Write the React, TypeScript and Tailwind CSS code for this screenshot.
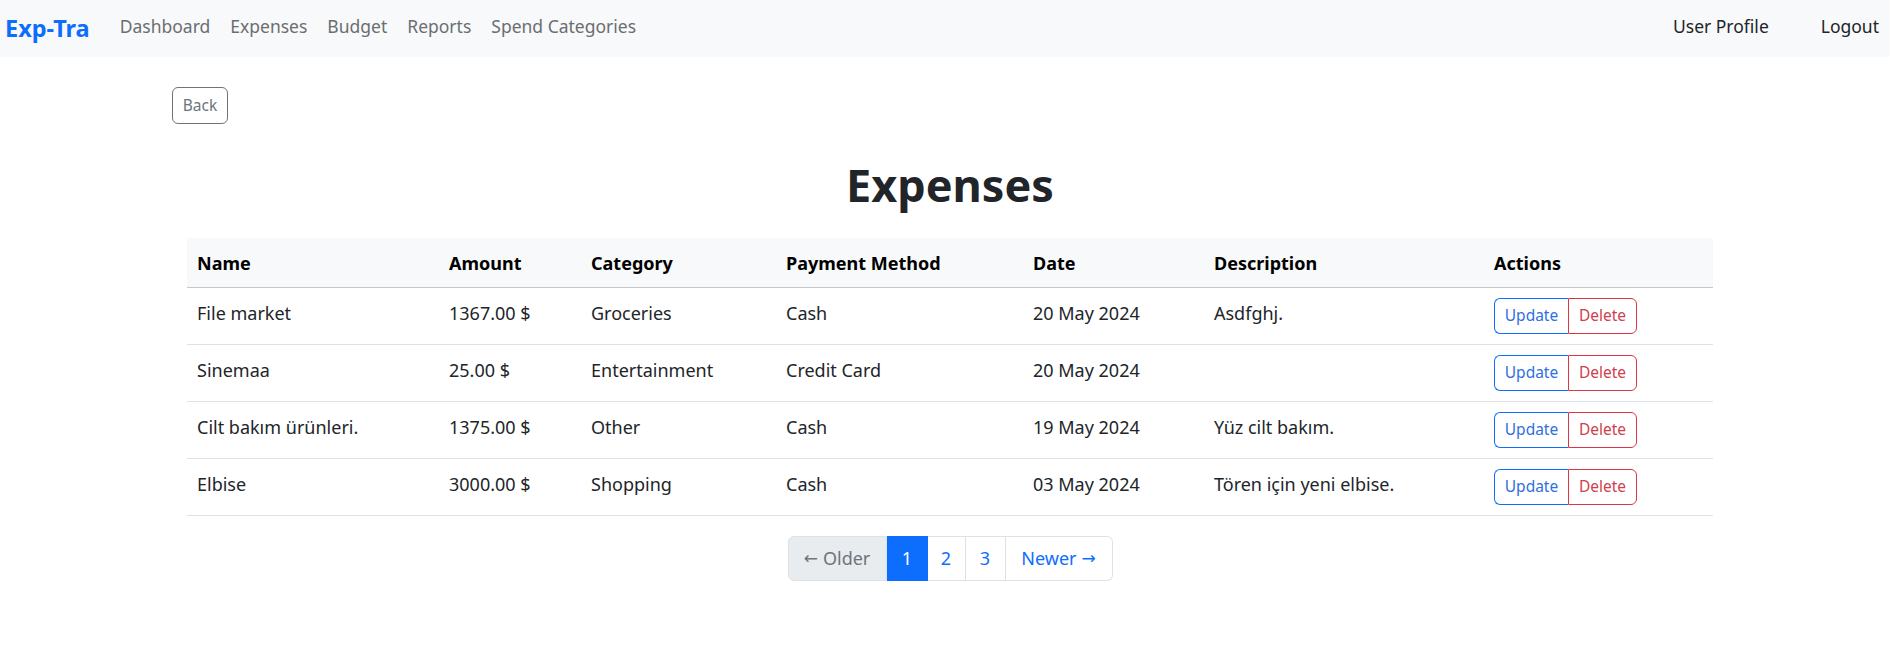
import { useState } from "react";

type Expense = {
  name: string;
  amount: string;
  category: string;
  method: string;
  date: string;
  description: string;
};

const expenses: Expense[] = [
  { name: "File market", amount: "1367.00 $", category: "Groceries", method: "Cash", date: "20 May 2024", description: "Asdfghj." },
  { name: "Sinemaa", amount: "25.00 $", category: "Entertainment", method: "Credit Card", date: "20 May 2024", description: "" },
  { name: "Cilt bakım ürünleri.", amount: "1375.00 $", category: "Other", method: "Cash", date: "19 May 2024", description: "Yüz cilt bakım." },
  { name: "Elbise", amount: "3000.00 $", category: "Shopping", method: "Cash", date: "03 May 2024", description: "Tören için yeni elbise." },
];

// header labels with the column widths measured off the layout
const columns = [
  { label: "Name", width: "w-[252px]" },
  { label: "Amount", width: "w-[142px]" },
  { label: "Category", width: "w-[195px]" },
  { label: "Payment Method", width: "w-[247px]" },
  { label: "Date", width: "w-[181px]" },
  { label: "Description", width: "w-[280px]" },
  { label: "Actions", width: "w-[229px]" },
];

function Navbar() {
  return (
    <nav className="h-[57px] bg-[#f8f9fa] flex items-center pb-[5px] text-[17.5px]">
      <a className="pl-[5px] mr-[20px] text-[23.5px] font-bold text-[#0d6efd] leading-none pt-[5px]">
        Exp-Tra
      </a>
      <ul className="flex items-center">
        {["Dashboard", "Expenses", "Budget", "Reports", "Spend Categories"].map((link) => (
          <li key={link} className="px-[10px] text-[#6b6e71]">
            {link}
          </li>
        ))}
      </ul>
      <ul className="ml-auto flex items-center gap-[52px] pr-[11px] text-[#212529]">
        <li>User Profile</li>
        <li>Logout</li>
      </ul>
    </nav>
  );
}

function Pagination() {
  return (
    <div className="flex justify-center mt-[20px]">
      <div className="flex h-[45px] text-[18px]">
        <span className="w-[99px] flex items-center justify-center gap-[5px] bg-[#e9ecef] text-[#6c757d] border border-[#dee2e6] rounded-l-[6px]">
          <span className="font-['DejaVu_Sans',sans-serif] text-[17px]">←</span>
          Older
        </span>
        <span className="w-[41px] flex items-center justify-center bg-[#0d6efd] text-white border border-[#0d6efd]">
          1
        </span>
        <span className="w-[38px] flex items-center justify-center text-[#0d6efd] border-y border-r border-[#dee2e6]">
          2
        </span>
        <span className="w-[40px] flex items-center justify-center text-[#0d6efd] border-y border-r border-[#dee2e6]">
          3
        </span>
        <span className="w-[107px] flex items-center justify-center gap-[5px] text-[#0d6efd] border-y border-r border-[#dee2e6] rounded-r-[6px]">
          Newer
          <span className="font-['DejaVu_Sans',sans-serif] text-[17px]">→</span>
        </span>
      </div>
    </div>
  );
}

export default function App() {
  const [page] = useState(1);

  return (
    <div className="min-h-screen bg-white font-['Noto_Sans',sans-serif] text-[#212529]">
      <Navbar />

      <div className="pl-[172px] pt-[30px]">
        <button className="h-[37px] w-[56px] rounded-[6px] border border-[#6c757d] text-[#6c757d] text-[15.5px]">
          Back
        </button>
      </div>

      <div className="w-[1526px] ml-[187px]" data-page={page}>
        <h1 className="mt-[33px] text-center text-[45px] leading-[55px] font-bold text-[#212529]">
          Expenses
        </h1>

        <table className="mt-[26px] w-full table-fixed border-collapse text-[18px] leading-[29px]">
          <thead>
            <tr className="bg-[#f8f9fa] border-b border-[#c6c7c8]">
              {columns.map((col) => (
                <th key={col.label} className={`${col.width} text-left font-bold text-black px-[10px] pt-[11px] pb-[9px]`}>
                  {col.label}
                </th>
              ))}
            </tr>
          </thead>
          <tbody>
            {expenses.map((e, key) => (
              <tr key={key} className="border-b border-[#dee2e6] align-top">
                <td className="px-[10px] pt-[11px] pb-[9px]">{e.name}</td>
                <td className="px-[10px] pt-[11px] pb-[9px]">{e.amount}</td>
                <td className="px-[10px] pt-[11px] pb-[9px]">{e.category}</td>
                <td className="px-[10px] pt-[11px] pb-[9px]">{e.method}</td>
                <td className="px-[10px] pt-[11px] pb-[9px]">{e.date}</td>
                <td className="px-[10px] pt-[11px] pb-[9px]">{e.description}</td>
                <td className="px-[10px] py-[10px]">
                  <div className="flex h-[36px] text-[15.5px] leading-none">
                    <button className="w-[74px] flex items-center justify-center border border-r-0 border-[#0d6efd] text-[#2f6fe0] rounded-l-[6px]">
                      Update
                    </button>
                    <button className="w-[69px] flex items-center justify-center border border-[#dc3545] text-[#d0404e] rounded-r-[6px]">
                      Delete
                    </button>
                  </div>
                </td>
              </tr>
            ))}
          </tbody>
        </table>

        <Pagination />
      </div>
    </div>
  );
}
